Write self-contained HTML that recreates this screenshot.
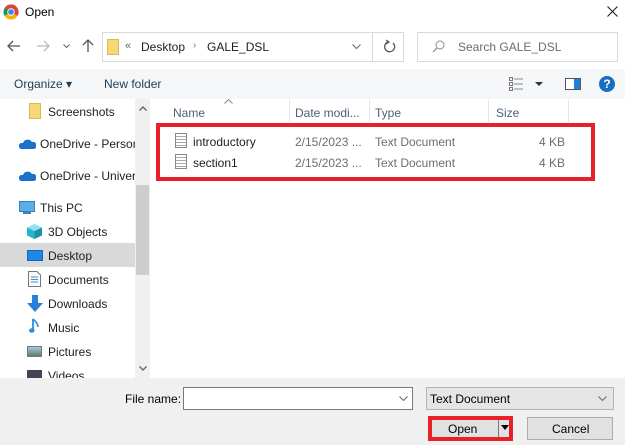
<!DOCTYPE html>
<html><head><style>
*{box-sizing:border-box;margin:0;padding:0}
body{width:625px;height:445px;overflow:hidden;background:#fff;font-family:"Liberation Sans",sans-serif;font-size:12px;color:#000;position:relative}
.a{position:absolute;white-space:nowrap}
.t{color:#1e1e1e}
.hd{color:#4c607a}
</style></head><body>
<!-- title -->
<svg class="a" style="left:3px;top:4px" width="16" height="16" viewBox="0 0 16 16"><path d="M8 8 L8 0.5 A7.5 7.5 0 0 1 14.5 11.75Z" fill="#db4437"/><path d="M8 8 L14.5 11.75 A7.5 7.5 0 0 1 1.5 11.75Z" fill="#f4b400"/><path d="M8 8 L1.5 11.75 A7.5 7.5 0 0 1 8 0.5Z" fill="#0f9d58"/><path d="M8 0.5 A7.5 7.5 0 0 1 14.5 11.75 L8 8Z" fill="#db4437"/><path d="M8 0.5 A7.5 7.5 0 0 0 1.5 4.25 L8 8Z" fill="#db4437"/><circle cx="8" cy="8" r="3.7" fill="#fff"/><circle cx="8" cy="8" r="2.9" fill="#4285f4"/></svg>
<div class="a" style="left:25px;top:5px;font-size:12px">Open</div>
<svg class="a" style="left:607px;top:6px" width="11" height="11"><path d="M0.5 0.5L10.5 10.5M10.5 0.5L0.5 10.5" stroke="#222" stroke-width="1.1"/></svg>
<!-- nav -->
<svg class="a" style="left:7px;top:40px" width="14" height="12"><path d="M1 6H13M6 1L1 6L6 11" stroke="#555" stroke-width="1.3" fill="none"/></svg>
<svg class="a" style="left:36px;top:40px" width="14" height="12"><path d="M1 6H13M8 1L13 6L8 11" stroke="#bbb" stroke-width="1.3" fill="none"/></svg>
<svg class="a" style="left:63px;top:44px" width="7" height="5"><path d="M0.5 0.5L3.5 3.5L6.5 0.5" stroke="#666" fill="none"/></svg>
<svg class="a" style="left:82px;top:39px" width="12" height="14"><path d="M6 13V1M1 6L6 1L11 6" stroke="#555" stroke-width="1.3" fill="none"/></svg>
<div class="a" style="left:102px;top:32px;width:302px;height:30px;border:1px solid #d9d9d9"></div>
<div class="a" style="left:372px;top:33px;width:1px;height:28px;background:#d9d9d9"></div>
<div class="a" style="left:107px;top:39px;width:12px;height:16px;background:#f8d775;border:1px solid #d9b85c"></div>
<div class="a" style="left:125px;top:40px;font-size:11px;color:#666">«</div>
<div class="a t" style="left:141px;top:40px">Desktop</div>
<div class="a" style="left:193px;top:40px;font-size:10px;color:#777">›</div>
<div class="a t" style="left:207px;top:40px">GALE_DSL</div>
<svg class="a" style="left:352px;top:44px" width="9" height="6"><path d="M0.5 0.5L4.5 4.5L8.5 0.5" stroke="#666" fill="none"/></svg>
<svg class="a" style="left:383px;top:39px" width="13" height="14"><path d="M10 4A5 5 0 1 1 5 3" stroke="#555" stroke-width="1.3" fill="none"/><path d="M3 1L6 3L3 5" stroke="#555" stroke-width="1.2" fill="none"/></svg>
<div class="a" style="left:417px;top:32px;width:201px;height:30px;border:1px solid #d9d9d9"></div>
<svg class="a" style="left:432px;top:40px" width="13" height="13"><circle cx="8" cy="5" r="4" stroke="#888" fill="none"/><path d="M5 8L1 12" stroke="#888" stroke-width="1.2"/></svg>
<div class="a" style="left:458px;top:40px;color:#6d6d6d">Search GALE_DSL</div>
<!-- toolbar -->
<div class="a" style="left:0;top:69px;width:625px;height:30px;background:#f5f6f7"></div>
<div class="a" style="left:14px;top:77px;color:#1e3d5a">Organize ▾</div>
<div class="a" style="left:104px;top:77px;color:#1e3d5a">New folder</div>
<svg class="a" style="left:509px;top:77px" width="34" height="14"><g fill="none" stroke="#777"><rect x="0.5" y="0.5" width="3" height="3"/><rect x="0.5" y="5.5" width="3" height="3"/><rect x="0.5" y="10.5" width="3" height="3"/></g><path d="M5 2H14M5 7H14M5 12H14" stroke="#888"/><path d="M26 5H34L30 9Z" fill="#333"/></svg>
<div class="a" style="left:565px;top:78px;width:16px;height:12px;border:1px solid #555;background:#fff"><div style="position:absolute;right:0;top:0;width:6px;height:10px;background:#1e7fd8"></div></div>
<div class="a" style="left:599px;top:76px;width:16px;height:16px;border-radius:50%;background:#1a6ec0;color:#fff;font-weight:bold;font-size:12px;text-align:center;line-height:16px">?</div>
<!-- sidebar -->
<div class="a" style="left:0;top:243px;width:135px;height:24px;background:#d9d9d9"></div>
<div class="a" style="left:29px;top:103px;width:12px;height:16px;background:#f8d775;border:1px solid #d9b85c"></div>
<div class="a t" style="left:48px;top:105px">Screenshots</div>
<svg class="a" style="left:19px;top:139px" width="17" height="10"><path d="M2 10 A3 3 0 0 1 4 4 A5 5 0 0 1 13 3 A3.5 3.5 0 0 1 15 10Z" fill="#1a73c8"/></svg>
<div class="a t" style="left:40px;top:137px">OneDrive - Person</div>
<svg class="a" style="left:19px;top:171px" width="17" height="10"><path d="M2 10 A3 3 0 0 1 4 4 A5 5 0 0 1 13 3 A3.5 3.5 0 0 1 15 10Z" fill="#1a73c8"/></svg>
<div class="a t" style="left:40px;top:169px">OneDrive - Univer</div>
<div class="a" style="left:19px;top:201px;width:16px;height:11px;background:#5aaee8;border:1px solid #3a7fc0"></div>
<div class="a" style="left:23px;top:212px;width:8px;height:2px;background:#4a7fb0"></div>
<div class="a t" style="left:40px;top:201px">This PC</div>
<svg class="a" style="left:27px;top:224px" width="15" height="15"><path d="M7.5 0L15 3.5L7.5 7L0 3.5Z" fill="#8fe3ef"/><path d="M0 3.5L7.5 7V15L0 11.5Z" fill="#26b5cc"/><path d="M15 3.5L7.5 7V15L15 11.5Z" fill="#1a93aa"/></svg>
<div class="a t" style="left:48px;top:225px">3D Objects</div>
<div class="a" style="left:27px;top:250px;width:16px;height:11px;background:#1e88e5;border:1px solid #1565c0"></div>
<div class="a t" style="left:48px;top:249px">Desktop</div>
<svg class="a" style="left:28px;top:271px" width="13" height="16"><path d="M0.5 0.5H9L12.5 4V15.5H0.5Z" fill="#f8f8f8" stroke="#777"/><path d="M3 6H10M3 8.5H10M3 11H10" stroke="#4a8fd0"/></svg>
<div class="a t" style="left:48px;top:273px">Documents</div>
<svg class="a" style="left:27px;top:295px" width="16" height="17"><path d="M5 0H11V8H16L8 17L0 8H5Z" fill="#2a7fd8"/></svg>
<div class="a t" style="left:48px;top:297px">Downloads</div>
<svg class="a" style="left:29px;top:318px" width="11" height="16"><path d="M4 1V12" stroke="#2a8ee0" stroke-width="1.8"/><ellipse cx="2.8" cy="12.5" rx="2.8" ry="2.3" fill="#2a8ee0"/><path d="M4 1Q9 5 9 9" stroke="#2a8ee0" stroke-width="1.6" fill="none"/></svg>
<div class="a t" style="left:48px;top:321px">Music</div>
<div class="a" style="left:27px;top:346px;width:15px;height:11px;background:linear-gradient(#a9c7e0,#5e7d6a);border:1px solid #777"></div>
<div class="a t" style="left:48px;top:345px">Pictures</div>
<div class="a" style="left:27px;top:370px;width:15px;height:8px;background:#445"></div>
<div class="a t" style="left:48px;top:369px">Videos</div>
<!-- scrollbar -->
<div class="a" style="left:135px;top:99px;width:15px;height:279px;background:#f0f0f0"></div>
<div class="a" style="left:136px;top:185px;width:13px;height:90px;background:#cdcdcd"></div>
<svg class="a" style="left:139px;top:106px" width="8" height="5"><path d="M0.5 4.5L4 1L7.5 4.5" stroke="#606060" stroke-width="1.3" fill="none"/></svg>
<svg class="a" style="left:139px;top:366px" width="8" height="5"><path d="M0.5 0.5L4 4L7.5 0.5" stroke="#606060" stroke-width="1.3" fill="none"/></svg>
<!-- headers -->
<svg class="a" style="left:224px;top:99px" width="9" height="5"><path d="M0.5 4.5L4.5 0.5L8.5 4.5" stroke="#888" fill="none"/></svg>
<div class="a hd" style="left:173px;top:106px">Name</div>
<div class="a hd" style="left:295px;top:106px">Date modi...</div>
<div class="a hd" style="left:375px;top:106px">Type</div>
<div class="a hd" style="left:496px;top:106px">Size</div>
<div class="a" style="left:289px;top:100px;width:1px;height:22px;background:#e5e5e5"></div>
<div class="a" style="left:369px;top:100px;width:1px;height:22px;background:#e5e5e5"></div>
<div class="a" style="left:488px;top:100px;width:1px;height:22px;background:#e5e5e5"></div>
<div class="a" style="left:568px;top:100px;width:1px;height:22px;background:#e5e5e5"></div>
<!-- files -->
<div class="a" style="left:156px;top:123px;width:439px;height:58px;border:4px solid #e8202a"></div>
<div class="a" style="left:175px;top:133px;width:12px;height:15px;border:1px solid #888;background:repeating-linear-gradient(#fff 0 2px,#aaa 2px 3px)"></div>
<div class="a t" style="left:193px;top:135px">introductory</div>
<div class="a" style="left:295px;top:135px;color:#6d6d6d">2/15/2023 ...</div>
<div class="a" style="left:375px;top:135px;color:#6d6d6d">Text Document</div>
<div class="a" style="left:539px;top:135px;color:#6d6d6d">4 KB</div>
<div class="a" style="left:175px;top:154px;width:12px;height:15px;border:1px solid #888;background:repeating-linear-gradient(#fff 0 2px,#aaa 2px 3px)"></div>
<div class="a t" style="left:193px;top:156px">section1</div>
<div class="a" style="left:295px;top:156px;color:#6d6d6d">2/15/2023 ...</div>
<div class="a" style="left:375px;top:156px;color:#6d6d6d">Text Document</div>
<div class="a" style="left:539px;top:156px;color:#6d6d6d">4 KB</div>
<!-- bottom -->
<div class="a" style="left:0;top:378px;width:625px;height:67px;background:#f0f0f0"></div>
<div class="a" style="left:125px;top:392px">File name:</div>
<div class="a" style="left:183px;top:387px;width:230px;height:23px;border:1px solid #7a7a7a;background:#fff"></div>
<svg class="a" style="left:399px;top:396px" width="9" height="5"><path d="M0.5 0.5L4.5 4.5L8.5 0.5" stroke="#666" fill="none"/></svg>
<div class="a" style="left:426px;top:387px;width:188px;height:23px;border:1px solid #b4b4b4;background:#e5e5e5"></div>
<div class="a" style="left:430px;top:392px">Text Document</div>
<svg class="a" style="left:598px;top:396px" width="9" height="5"><path d="M0.5 0.5L4.5 4.5L8.5 0.5" stroke="#666" fill="none"/></svg>
<div class="a" style="left:428px;top:416px;width:85px;height:25px;border:4px solid #e8202a;background:#e1e1e1"></div>
<div class="a" style="left:498px;top:420px;width:1px;height:17px;background:#777"></div>
<div class="a" style="left:448px;top:422px">Open</div>
<svg class="a" style="left:501px;top:425px" width="8" height="5"><path d="M0 0H8L4 5Z" fill="#000"/></svg>
<div class="a" style="left:527px;top:417px;width:86px;height:23px;border:1px solid #adadad;background:#e1e1e1"></div>
<div class="a" style="left:552px;top:422px">Cancel</div>
</body></html>
